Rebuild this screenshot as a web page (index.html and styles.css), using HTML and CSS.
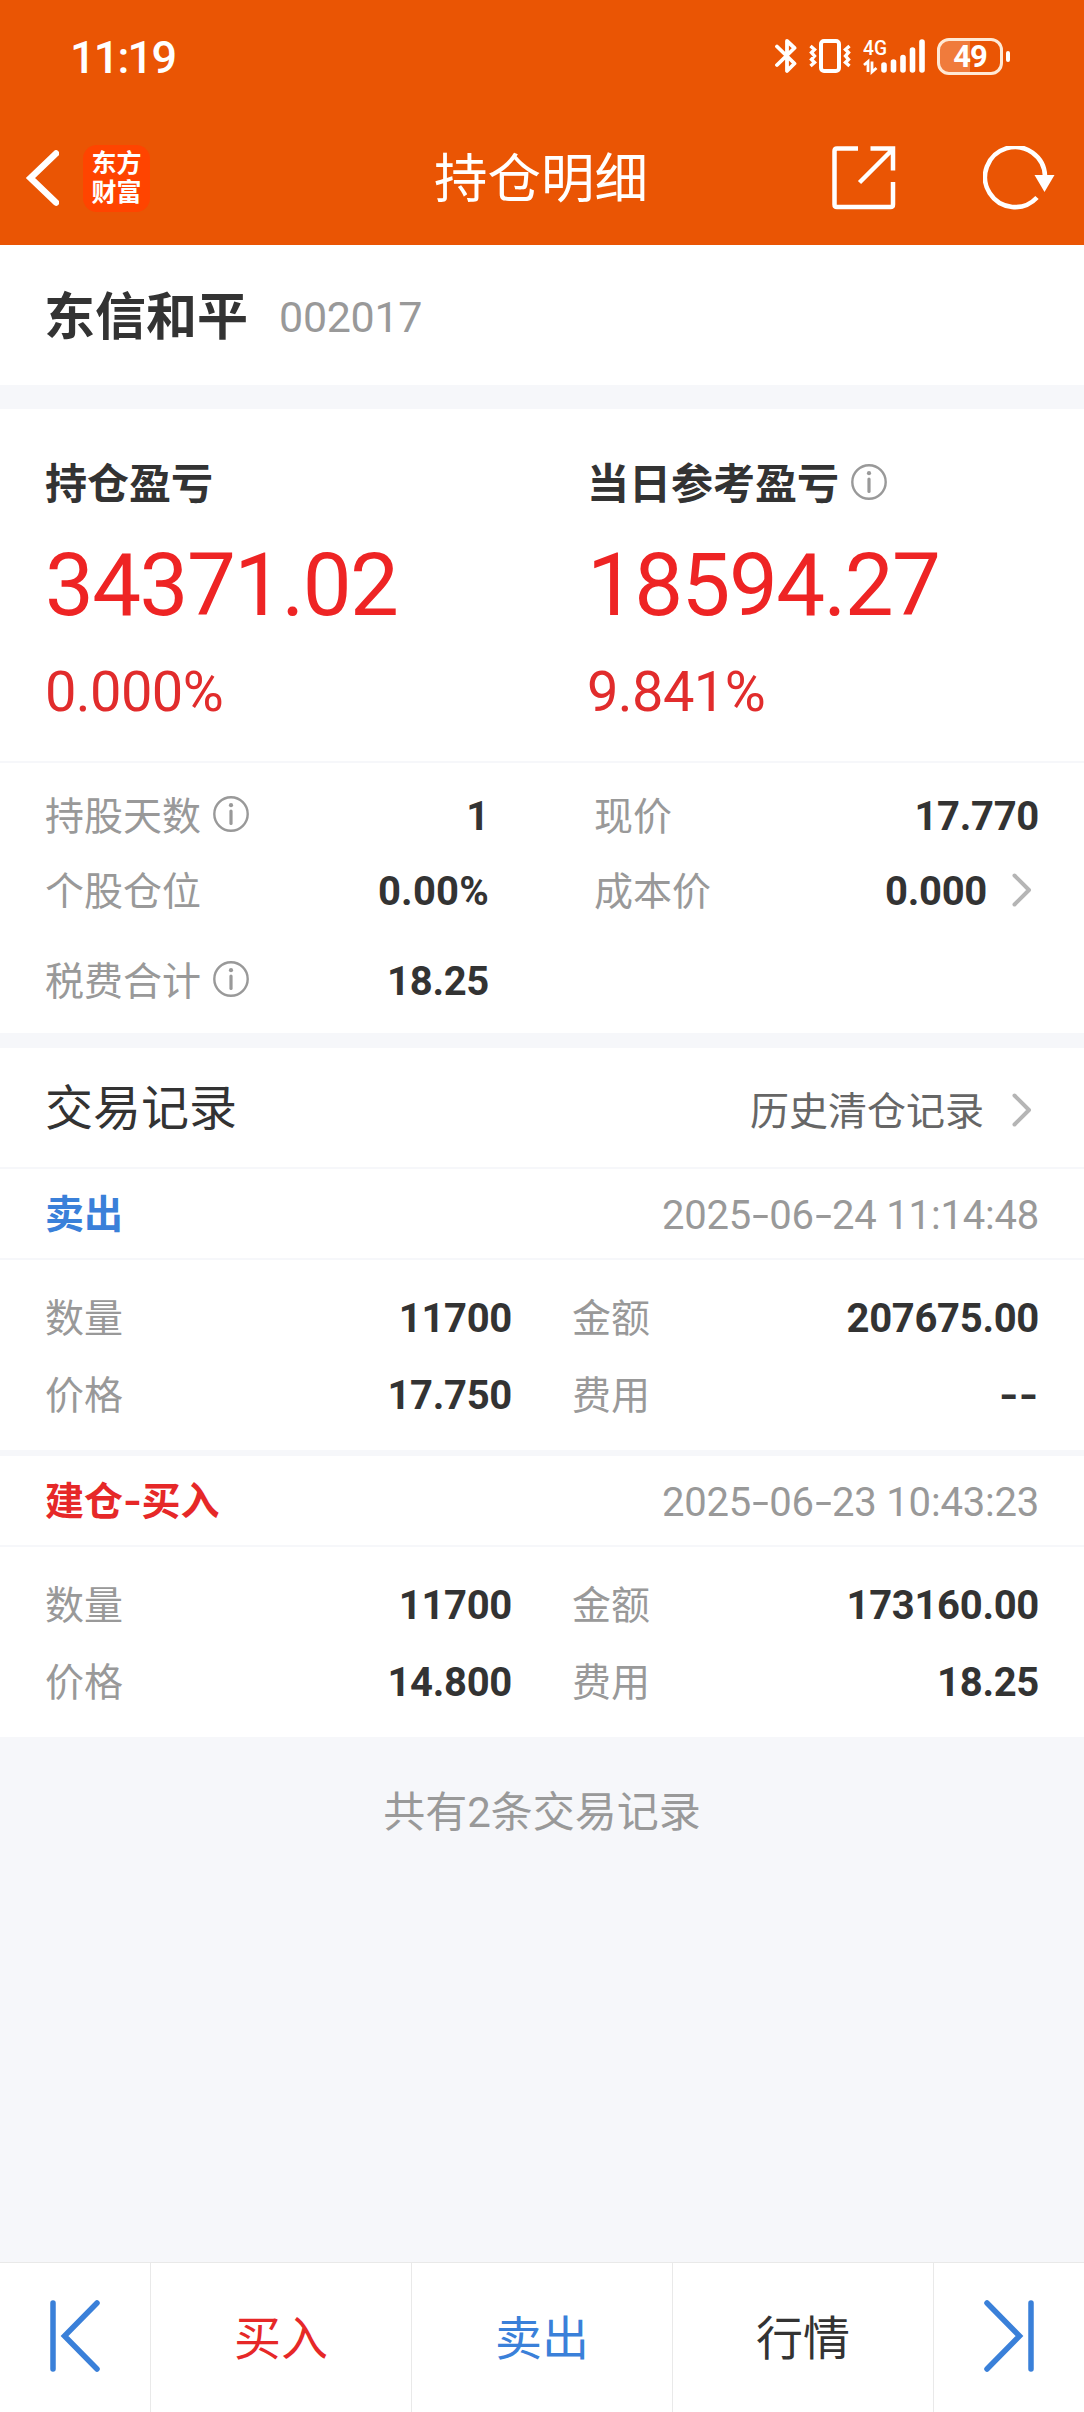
FILE: index.html
```
<!DOCTYPE html>
<html lang="zh-CN">
<head>
    <meta charset="UTF-8">
    <meta name="viewport" content="width=device-width, initial-scale=1.0">
    <title>持仓明细</title>
    <link rel="stylesheet" href="styles.css">
</head>
<body>

    <svg class="sprite">
        <symbol id="info" viewBox="0 0 36 36">
            <circle cx="18" cy="18" r="16.7" fill="none" stroke="#999" stroke-width="2.4"/>
            <circle cx="18" cy="9.200" r="2.1" fill="#999"/>
            <path d="M18 15v12.5" stroke="#999" stroke-width="3.2" stroke-linecap="round"/>
        </symbol>
        <symbol id="arrow" viewBox="0 0 20 34">
            <path d="M2.5 2.5L17 17L2.5 31.5" fill="none" stroke="#b5b5b5" stroke-width="4" stroke-linecap="round" stroke-linejoin="round"/>
        </symbol>
    </svg>

    <header class="header">
        <div class="status">
            <span class="time">11:19</span>
            <div class="status-icons">
                <svg class="bluetooth" width="22" height="36" viewBox="0 0 22 36" fill="none" stroke="#fff" stroke-width="3.8" stroke-linejoin="round" stroke-linecap="round">
                    <path d="M2 8.500L19.500 25.500L12 33V3L19.500 10L2 27"/>
                </svg>
                <svg class="vibrate" width="42" height="36" viewBox="0 0 42 36" fill="none" stroke="#fff">
                    <rect x="12" y="3" width="18" height="30" rx="3" stroke-width="4"/>
                    <path d="M1.500 8L5.500 11.500L2.500 14.500L5.500 18L2.500 21.500L5.500 24.500L1.500 28M40.500 8L36.500 11.500L39.500 14.500L36.500 18L39.500 21.500L36.500 24.500L40.500 28" stroke-width="3.4"/>
                </svg>
                <svg class="signal" width="62" height="46" viewBox="0 -5 62 46">
                    <text class="network" x="0" y="17" textLength="24" lengthAdjust="spacingAndGlyphs">4G</text>
                    <path d="M1 27l4-3.500v10.500M9 23.500v10.500l4.500-4" fill="none" stroke="#fff" stroke-width="2.8"/>
                    <path d="M21 27v5M30.500 24v8M40 19.500v12.500M49.500 12v20M59 4v28" stroke="#fff" stroke-width="5.600" stroke-linecap="round"/>
                </svg>
                <div class="battery"><span>49</span></div>
                <i class="battery-cap"></i>
            </div>
        </div>
        <div class="nav">
            <div class="nav-left">
                <svg width="34" height="56" viewBox="0 0 34 56">
                    <path d="M31 3.500L5.500 28L31 52.500" fill="none" stroke="#fff" stroke-width="6.500" stroke-linecap="round"/>
                </svg>
                <div class="logo">东方<br>财富</div>
            </div>
            <h1>持仓明细</h1>
            <div class="nav-right">
                <svg width="64" height="64" viewBox="0 0 64 64" fill="none" stroke="#fff" stroke-width="4.500">
                    <path d="M26 2.500H5Q2.500 2.500 2.500 5V58.500Q2.500 61 5 61H58.500Q61 61 61 58.500V36M38.500 2.500H61V24.500M27.500 36.500L60 4"/>
                </svg>
                <svg width="72" height="64" viewBox="0 0 72 64">
                    <path d="M62 30A30 30 0 1 0 54 51.500" fill="none" stroke="#fff" stroke-width="4.600"/>
                    <path d="M51.500 29H71.500L61.500 46z" fill="#fff"/>
                </svg>
            </div>
        </div>
    </header>

    <section class="stock">
        <h2>东信和平</h2>
        <span class="code">002017</span>
    </section>

    <section class="profit">
        <div class="profit-item">
            <h3>持仓盈亏</h3>
            <p class="amount">34371.02</p>
            <p class="rate">0.000%</p>
        </div>
        <div class="profit-item">
            <h3>当日参考盈亏<svg class="info"><use href="#info"/></svg></h3>
            <p class="amount">18594.27</p>
            <p class="rate">9.841%</p>
        </div>
    </section>

    <section class="stats">
        <div class="cell"><span>持股天数<svg class="info"><use href="#info"/></svg></span><b>1</b></div>
        <div class="cell"><span>现价</span><b>17.770</b></div>
        <div class="cell"><span>个股仓位</span><b class="percent">0.00%</b></div>
        <div class="cell"><span>成本价</span><b>0.000<svg class="arrow"><use href="#arrow"/></svg></b></div>
        <div class="cell"><span>税费合计<svg class="info"><use href="#info"/></svg></span><b>18.25</b></div>
    </section>

    <section class="records">
        <div class="records-title">
            <h2>交易记录</h2>
            <a class="history">历史清仓记录<svg class="arrow"><use href="#arrow"/></svg></a>
        </div>

        <div class="record">
            <div class="record-head">
                <strong class="sell">卖出</strong>
                <time>2025<i class="dash">-</i>06<i class="dash">-</i>24 11:14:48</time>
            </div>
            <div class="record-body">
                <div class="cell"><span>数量</span><b>11700</b></div>
                <div class="cell"><span>金额</span><b>207675.00</b></div>
                <div class="cell"><span>价格</span><b>17.750</b></div>
                <div class="cell"><span>费用</span><b class="empty">--</b></div>
            </div>
        </div>

        <div class="record">
            <div class="record-head">
                <strong class="buy">建仓<i class="dash">-</i>买入</strong>
                <time>2025<i class="dash">-</i>06<i class="dash">-</i>23 10:43:23</time>
            </div>
            <div class="record-body">
                <div class="cell"><span>数量</span><b>11700</b></div>
                <div class="cell"><span>金额</span><b>173160.00</b></div>
                <div class="cell"><span>价格</span><b>14.800</b></div>
                <div class="cell"><span>费用</span><b>18.25</b></div>
            </div>
        </div>
    </section>

    <p class="total">共有2条交易记录</p>

    <footer class="tabbar">
        <a class="page">
            <svg width="52" height="72" viewBox="0 0 52 72" fill="none" stroke="#3a80d9" stroke-width="5.500" stroke-linecap="round">
                <path d="M4 3V69M48 3L15.500 36L48 69"/>
            </svg>
        </a>
        <a class="buy">买入</a>
        <a class="sell">卖出</a>
        <a>行情</a>
        <a class="page">
            <svg width="52" height="72" viewBox="0 0 52 72" fill="none" stroke="#3a80d9" stroke-width="5.500" stroke-linecap="round">
                <path d="M48 3V69M4 3L36.500 36L4 69"/>
            </svg>
        </a>
    </footer>

</body>
</html>
```

FILE: styles.css
```
* {
    box-sizing: border-box;
    margin: 0;
    padding: 0;
}
body {
    display: flex;
    flex-direction: column;
    height: 2412px;
    font-family: Roboto, "Noto Sans CJK SC", sans-serif;
    font-size: 39px;
    line-height: 1.2;
    color: #333;
    background-color: #f6f7fa;
}
svg {
    display: block;
    flex: none;
}
.sprite {
    position: absolute;
    width: 0;
    height: 0;
}
.info {
    width: 36px;
    height: 36px;
}
.arrow {
    width: 20px;
    height: 34px;
}
.buy {
    color: #e62828;
}
.sell {
    color: #3a80d9;
}

/* header */
.header {
    height: 245px;
    color: #fff;
    background-color: #ea5504;
}
.status {
    display: flex;
    justify-content: space-between;
    height: 111px;
    padding: 0 74px 0 70px;
    align-items: center;
}
.time {
    font-size: 45px;
    font-weight: 500;
    letter-spacing: -1.8px;
    margin-top: 4px;
}
.status-icons {
    display: flex;
    align-items: center;
    padding-top: 1px;
}
.vibrate {
    margin-left: 12px;
}
.signal {
    margin-left: 12px;
}
.network {
    font-size: 21px;
    font-weight: 500;
    fill: #fff;
}
.battery {
    width: 66px;
    height: 37px;
    margin-left: 12px;
    border: 3px solid #ffe9d5;
    border-radius: 12px;
    background: linear-gradient(90deg, #f07b3c 50%, transparent 50%);
    font-size: 31px;
    font-weight: 700;
    line-height: 32px;
    letter-spacing: -1px;
    text-align: center;
}
.battery-cap {
    width: 4px;
    height: 11px;
    margin-left: 3px;
    border-radius: 2px;
    background-color: #fff;
}
.nav {
    display: grid;
    grid-template-columns: 1fr auto 1fr;
    align-items: center;
    height: 134px;
    padding: 0 29px 0 25px;
}
.nav-left, .nav-right {
    display: flex;
    align-items: center;
}
.nav-left {
    gap: 24px;
}
.nav-right {
    justify-content: flex-end;
    gap: 87px;
}
.nav h1 {
    padding: 5px 0 0 2px;
    font-size: 53.5px;
    font-weight: 400;
}
.logo {
    width: 67px;
    height: 67px;
    padding-top: 4px;
    border-radius: 14px;
    background-color: #ff4400;
    font-size: 25px;
    font-weight: 700;
    line-height: 29px;
    text-align: center;
}

/* stock name */
.stock {
    display: flex;
    align-items: center;
    height: 140px;
    padding: 5px 0 0 44px;
    background-color: #fff;
}
.stock h2 {
    font-size: 51px;
}
.code {
    margin-left: 31px;
    font-size: 43px;
    letter-spacing: -0.3px;
    color: #999;
}

/* profit */
.profit {
    display: grid;
    grid-template-columns: 1fr 1fr;
    height: 354px;
    margin-top: 24px;
    padding-top: 51px;
    border-bottom: 2px solid #f6f7fa;
    background-color: #fff;
}
.profit-item {
    padding-left: 45px;
}
.profit h3 {
    display: flex;
    align-items: center;
    height: 50px;
    font-size: 42px;
}
.profit .info {
    margin: -6px 0 0 12px;
}
.amount {
    height: 104px;
    margin-top: 23px;
    font-size: 87px;
    line-height: 104px;
    letter-spacing: -1.6px;
    color: #ee2424;
}
.rate {
    margin-top: 21px;
    font-size: 56px;
    line-height: 68px;
    letter-spacing: -0.6px;
    color: #e12c2c;
}

/* label and value pairs */
.cell {
    display: flex;
    align-items: center;
    justify-content: space-between;
}
.cell span {
    display: flex;
    align-items: center;
    padding-top: 4px;
    color: #999;
}
.cell b {
    display: flex;
    align-items: center;
    padding-top: 3px;
    font-size: 40px;
    letter-spacing: -0.3px;
}
.cell .info {
    margin: -6px 0 0 12px;
}
.cell .arrow {
    margin: -4px 7px 0 25px;
}
.cell .percent {
    letter-spacing: 0.2px;
}
.cell .empty {
    letter-spacing: 0;
    transform: scaleX(1.25);
    transform-origin: right;
}
.stats {
    display: grid;
    grid-template-columns: 444px 445px;
    grid-template-rows: 75px 75px 105px;
    column-gap: 105px;
    height: 270px;
    padding: 15px 45px 0;
    background-color: #fff;
}

/* trade records */
.records {
    margin-top: 15px;
}
.records-title {
    display: flex;
    align-items: center;
    justify-content: space-between;
    height: 121px;
    padding: 3px 52px 0 45px;
    border-bottom: 2px solid #f6f7fa;
    background-color: #fff;
}
.records-title h2 {
    font-size: 48px;
    font-weight: 400;
}
.history {
    display: flex;
    align-items: center;
    padding-top: 7px;
    color: #666;
}
.history .arrow {
    margin: -5px 0 0 28px;
}
.record {
    background-color: #fff;
}
.record + .record {
    margin-top: 6px;
}
.record-head {
    display: flex;
    align-items: center;
    justify-content: space-between;
    height: 91px;
    padding: 4px 45px 0;
    border-bottom: 2px solid #f6f7fa;
}
.record-head time {
    font-size: 40px;
    letter-spacing: -0.2px;
    color: #999;
}
.dash {
    display: inline-block;
    margin: 0 3.7px;
    font-style: normal;
    transform: scaleX(1.5);
}
.buy .dash {
    margin: 0 1.5px;
    transform: scaleX(1.25);
}
.record-body {
    display: grid;
    grid-template-columns: 467px 467px;
    grid-template-rows: 77px 77px;
    column-gap: 60px;
    height: 190px;
    padding: 19px 45px 0;
}
.total {
    margin-top: 51px;
    font-size: 42px;
    text-align: center;
    color: #999;
}

/* bottom bar */
.tabbar {
    display: grid;
    grid-template-columns: 151px 261px 261px 261px 150px;
    height: 150px;
    margin-top: auto;
    border-top: 1px solid #e9e9e9;
    background-color: #fff;
    font-size: 47px;
}
.tabbar a {
    display: flex;
    align-items: center;
    justify-content: center;
    padding-top: 4px;
    border-right: 1px solid #e9e9e9;
}
.tabbar .page {
    padding: 0 0 4px;
}
.tabbar a:last-child {
    border-right: none;
}
```
